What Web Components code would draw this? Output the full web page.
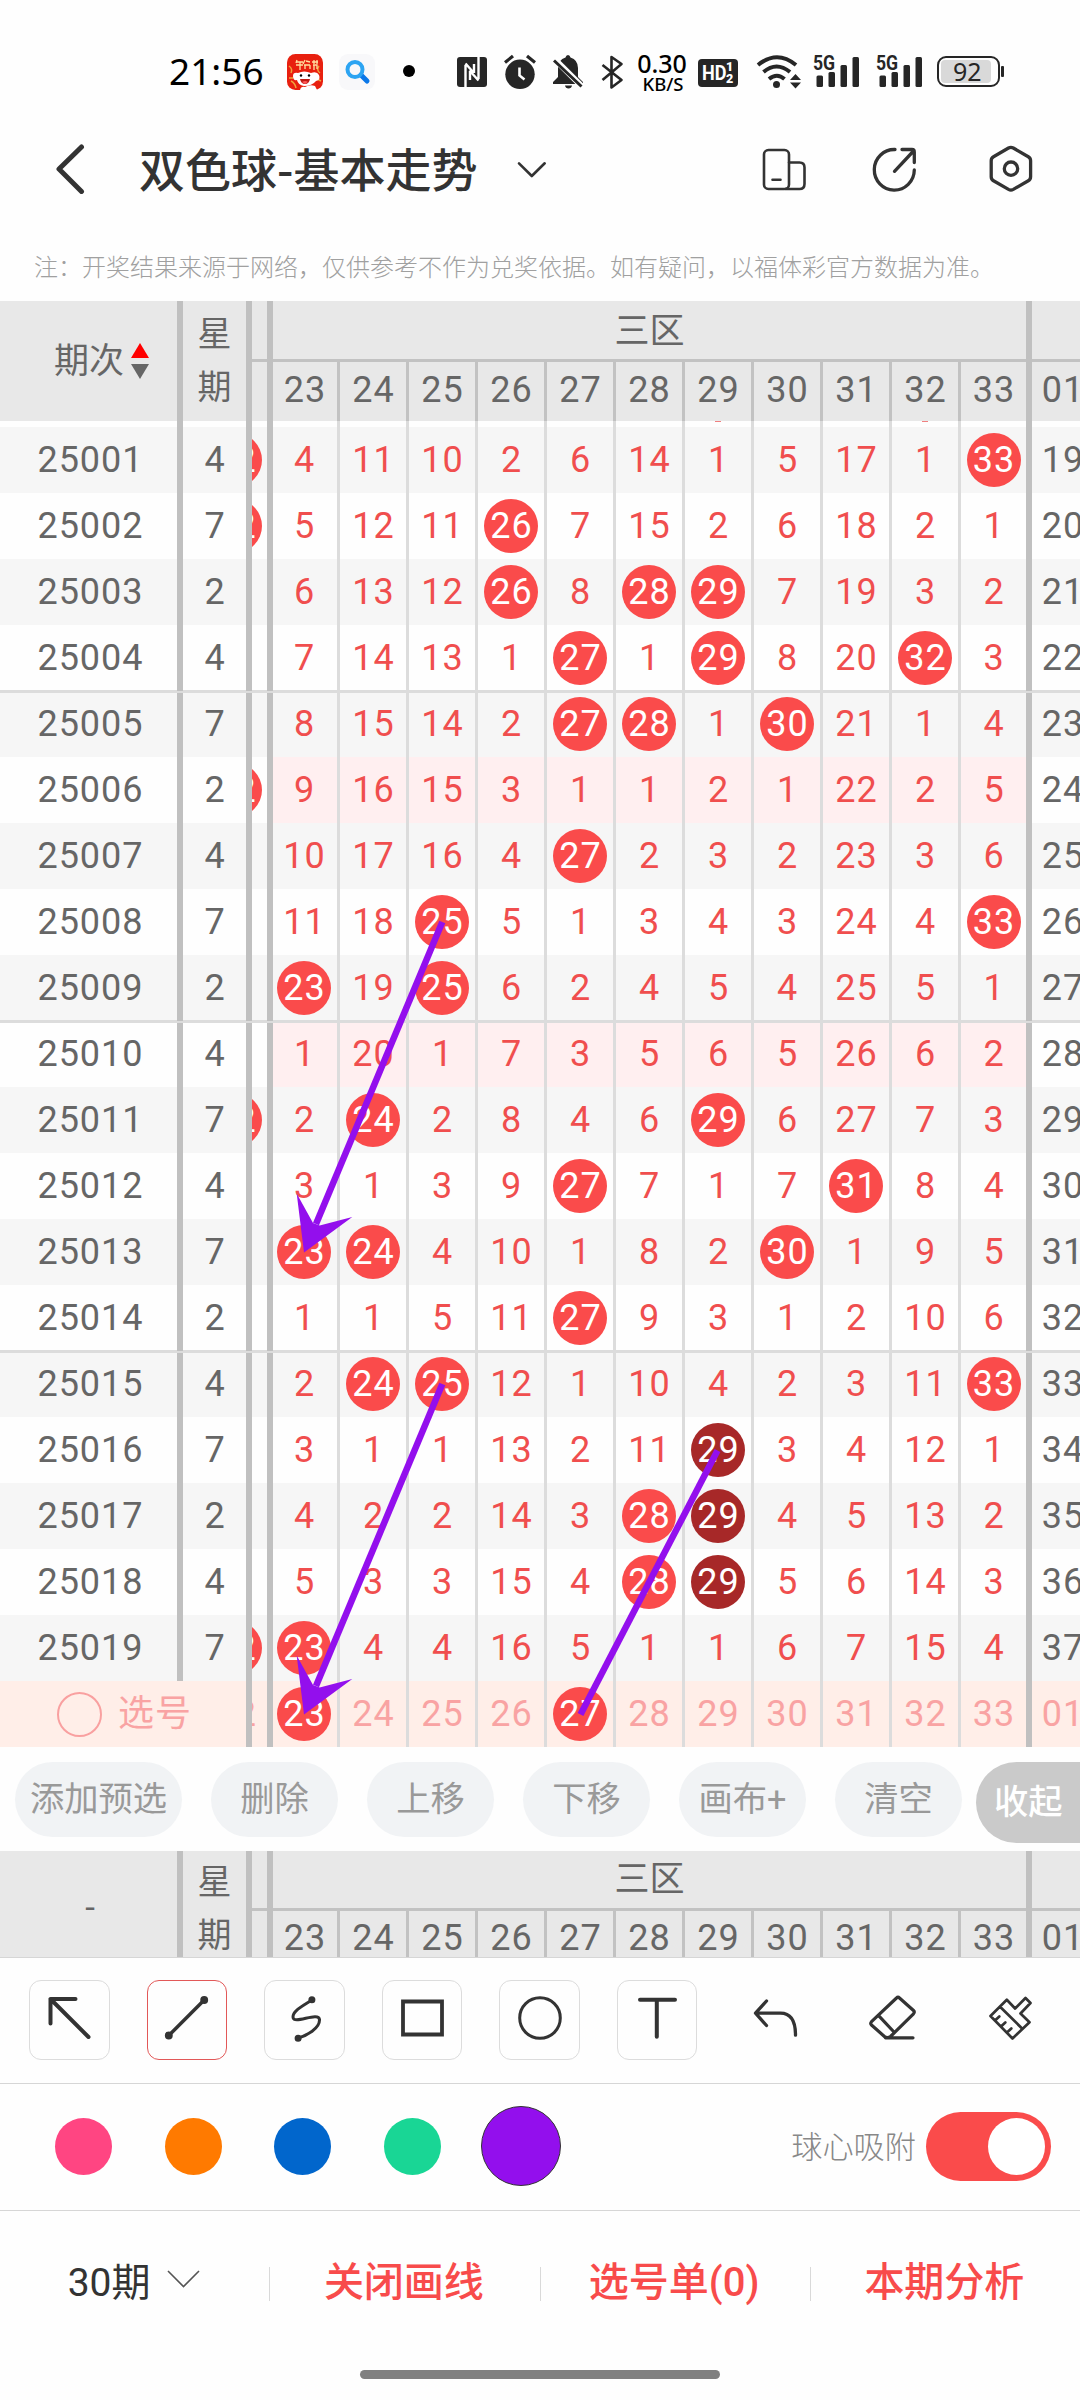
<!DOCTYPE html>
<html lang="zh-CN">
<head>
<meta charset="utf-8">
<title>双色球-基本走势</title>
<style>
html,body{margin:0;padding:0;background:#fefefe}
body{width:1080px;height:2400px;overflow:hidden;font-family:Roboto,"Noto Sans CJK SC",sans-serif;color:#333}
</style>
</head>
<body>
<lottery-app></lottery-app>
<script>
const define = (tag, css, html) => customElements.define(tag, class extends HTMLElement {
  constructor() {
    super();
    this.attachShadow({mode: 'open'}).innerHTML =
      `<style>*{box-sizing:border-box}:host{display:block;box-sizing:border-box}svg{display:block;flex:none}${css}</style>` +
      (typeof html === 'function' ? html(this) : html);
  }
});

define('status-bar', `
:host{display:flex;align-items:flex-start;height:102px;padding-left:169px}
:host>*{flex:none}
.time{width:96px;margin-top:46px;font:450 37px/50px "Noto Sans",sans-serif;color:#000;white-space:nowrap}
.rate{width:54px;margin:50px 0 0 11px;text-align:center;color:#000;font-family:"Noto Sans",sans-serif;white-space:nowrap}
.rate b{display:block;font-size:25px;line-height:26px;font-weight:500}
.rate i{display:block;font-style:normal;font-size:18.5px;line-height:15px;font-weight:500;margin-left:2px}
.hd{display:flex;width:40px;height:28px;margin:59px 0 0 9px;border-radius:4px;background:#262626;color:#fff;font:700 21px/28px Roboto,sans-serif;padding-left:4px}
.hd small{display:flex;flex-direction:column;font-size:12.5px;line-height:12px;padding-top:2px;margin-left:0}
.hd span{transform:scaleX(.86);transform-origin:0 0;width:24px}
.net{display:flex;margin:54px 0 0 12px;width:48px;height:34px;position:relative}
.net span{position:absolute;left:0;top:0;font:700 21px/18px Roboto,sans-serif;color:#262626;transform:scaleX(.84);transform-origin:0 0}
.bat{display:flex;align-items:center;margin:56px 0 0 13px}
.bat div{width:63px;height:31px;border:2.5px solid #262626;border-radius:9px;padding:2px 7px 2px 2px;display:flex}
.bat span{flex:1;background:#d9d9d9;border-radius:4px;text-align:center;font:400 25px/22px "Noto Sans",sans-serif;color:#262626;padding-left:3px}
.bat i{width:2.5px;height:11px;background:#262626;margin-left:1.5px;border-radius:1px}
`, `
<span class="time">21:56</span>
<svg style="margin:54px 0 0 22px" width="36" height="36" viewBox="0 0 36 36"><rect width="36" height="36" rx="8.5" fill="#e8200f"/><path d="M2 12q4 3 2 7M32 12q-3 4 1 7M4 27q4 2 5 7M2 24h4M30 25l4 2" stroke="#f0a33c" stroke-width="1.5" fill="none"/><path d="M10 6l-1 3M9 8h7M9 11h7M13 8v8M18 6l-2 4M19 7l4 1M17 11h6M18 11v4M23 11v4M25 8h6M27 6v4M30 6v4M26 11h4v4M27 11v5" stroke="#ffe0a0" stroke-width="1.3" fill="none"/><path d="M6 22q0-4 5-3q6-3 13 0q6-2 8 2q2 5-3 6q-4 5-12 5q-6-1-7-6q-4 1-4-4z" fill="#fff"/><circle cx="14" cy="21.5" r="1.2"/><circle cx="22" cy="21.5" r="1.2"/><path d="M13 25h10q-1 5-5 5t-5-5z" fill="#bf1912"/><path d="M15 28q3-2 6 0l-3 2z" fill="#f55"/><path d="M13 36q1-4 5-3q5-3 10-1l2 4z" fill="#fff"/></svg>
<svg style="margin:54px 0 0 16px" width="36" height="36" viewBox="339 54 36 36"><rect x="339" y="54" width="36" height="36" rx="9" fill="#f8f8fa"/><path d="M361 75l6 6" stroke="#0b77e8" stroke-width="5" stroke-linecap="round"/><circle cx="355" cy="69.500" r="7.500" fill="none" stroke="#2ca4f2" stroke-width="4"/></svg>
<svg style="margin:64.500px 0 0 28px" width="12" height="12"><circle cx="6" cy="6" r="6"/></svg>
<svg style="margin:57px 0 0 42px" width="30" height="30" viewBox="0 0 30 30"><rect width="30" height="30" rx="3" fill="#262626"/><path d="M8.500 30V8M8.500 6.500l8 9M13 14v9M21.500 0v22M21.500 23.500l-9-10M17 7v9" stroke="#fff" stroke-width="2.400" fill="none"/></svg>
<svg style="margin:54px 0 0 17px" width="32" height="36" viewBox="504 54 32 36"><circle cx="520" cy="74.300" r="14.700" fill="#262626"/><path d="M505 62.500l8-6.500M535 62.500l-8-6.500" stroke="#262626" stroke-width="3.200"/><path d="M519.500 67.500v8l5 4" stroke="#fff" stroke-width="2.600" fill="none"/></svg>
<svg style="margin:54px 0 0 16px" width="32" height="36" viewBox="552 54 32 36"><path d="M568 55q2 0 2.500 2.500Q578 60 578 68v9l5 5v2h-30v-2l5-5v-9q0-8 7.500-10.500Q566 55 568 55zM565 85.500h7q-.5 3-3.500 3t-3.500-3z" fill="#262626"/><path d="M554 58.500l28 28" stroke="#fff" stroke-width="6"/><path d="M554 60.500l27.500 26" stroke="#262626" stroke-width="3"/></svg>
<svg style="margin:54px 0 0 17px" width="23" height="36" viewBox="601 54 23 36"><path d="M602.500 65l19 15-10 7.500V57l10 7-19 16" stroke="#262626" stroke-width="2.600" fill="none" stroke-linejoin="round"/></svg>
<span class="rate"><b>0.30</b><i>KB/S</i></span>
<span class="hd"><span>HD</span><small><b>1</b><b>2</b></small></span>
<svg style="margin:54px 0 0 18px" width="45" height="36" viewBox="756 54 45 36"><g fill="none" stroke="#262626" stroke-width="4"><path d="M758 65q19-15.500 38 0"/><path d="M763.500 72q13-11 26.500 0"/><path d="M769 79q8-6.500 15.500 0"/></g><circle cx="776.500" cy="84.500" r="3.500" fill="#262626"/><path d="M790 80h11l-5.500-6zM790 82.500h11l-5.500 6z" fill="#262626"/></svg>
<span class="net"><svg width="48" height="34" viewBox="0 0 48 34" fill="#262626"><rect x="3.500" y="21.500" width="6.500" height="11.500" rx="1.500"/><rect x="15.500" y="18" width="6.500" height="15" rx="1.500"/><rect x="27.500" y="11" width="6.500" height="22" rx="1.500"/><rect x="39.500" y="3" width="6.500" height="30" rx="1.500"/></svg><span>5G</span></span>
<span class="net" style="margin-left:14.700px"><svg width="48" height="34" viewBox="0 0 48 34" fill="#262626"><rect x="3.500" y="21.500" width="6.500" height="11.500" rx="1.500"/><rect x="15.500" y="18" width="6.500" height="15" rx="1.500"/><rect x="27.500" y="11" width="6.500" height="22" rx="1.500"/><rect x="39.500" y="3" width="6.500" height="30" rx="1.500"/></svg><span>5G</span></span>
<span class="bat"><div><span>92</span></div><i></i></span>
`);

define('title-bar', `
:host{display:flex;align-items:center;height:134px;padding-left:56px}
h1{margin:0 0 5px 54px;width:341px;font:500 46px/60px "Noto Sans CJK SC",sans-serif;color:#333;white-space:nowrap}
svg{fill:none;stroke:#333;stroke-linecap:round;stroke-linejoin:round}
`, `
<svg width="29" height="50" viewBox="56 143 29 50" stroke-width="5"><path d="M81.500 146L59 168l22.500 22.500"/></svg>
<h1>双色球-基本走势</h1>
<svg style="margin-left:36px" width="32" height="20" viewBox="516 158 32 20" stroke-width="2.600"><path d="M519 162.300l12.800 12.700 12.900-12.700"/></svg>
<svg style="margin-left:213px" width="46" height="44" viewBox="761 147 46 44" stroke-width="2.600"><rect x="764" y="150" width="25" height="39" rx="4.500"/><path d="M789 162.500h10.500q5 0 5 5v16.500q0 5-5 5h-14M772.500 179.700h8"/></svg>
<svg style="margin-left:64px" width="47" height="46" viewBox="871 146 47 46" stroke-width="3.300"><path d="M895 149.500a20 20.300 0 1 0 19.300 20.500M894.500 171.300L914 150.500M902 149.500h10q2.300 0 2.300 2.500v10.500"/></svg>
<svg style="margin-left:71px" width="44" height="50" viewBox="989 144 44 50" stroke-width="3.300"><path d="M1008.500 148q2.400-1.300 4.800 0l15 8.700q2.300 1.300 2.300 4v16q0 2.700-2.300 4l-15 8.700q-2.400 1.300-4.800 0l-15-8.700q-2.300-1.300-2.300-4v-16q0-2.700 2.300-4z"/><circle cx="1011" cy="168.700" r="6.700"/></svg>
`);

define('notice-line', `
:host{height:65px;padding-left:34px;font:300 24px/60px "Noto Sans CJK SC",sans-serif;color:#a0a0a0;white-space:nowrap}
`, `<slot></slot>`);

define('trend-ball', `
:host{display:flex;flex:none;align-items:center;justify-content:center;width:54px;height:54px;border-radius:50%;background:#fa4b4b;color:#fff;padding-left:1px;line-height:54px}
:host([dark]){background:#a72828}
`, `<slot></slot>`);

const HEADS = [23,24,25,26,27,28,29,30,31,32,33];

define('trend-head', `
:host{display:flex;height:var(--h,120px);background:#e8e8e8;color:#666;font-size:36px;overflow:hidden}
.period{flex:none;width:183px;border-right:6px solid #c0c0c0;display:flex;align-items:center;justify-content:center;gap:7px;padding:var(--pp,0 0 7px 26px);font-size:35px}
.week{flex:none;width:69px;border-right:6px solid #c0c0c0;text-align:center;font-size:34px;line-height:53px;padding-top:var(--wp,7px)}
.week span{display:block}
.zone{flex:none;display:flex;flex-direction:column}
.zone header{flex:none;height:var(--zh,61px);border-bottom:3px solid #c2c2c2;text-align:center;font-size:35px;line-height:var(--zl,61px)}
.cols{flex:1;display:flex}
.cols span{width:69px;border-right:3px solid #c2c2c2;text-align:center;letter-spacing:1px;line-height:var(--nl,56px);padding-left:1px}
.cols span:first-child{width:67px;padding-right:1px}
.cols span:last-child{width:65px;border:0}
.gap{width:21px;border-right:6px solid #c0c0c0}
.main{width:759px;border-right:6px solid #c0c0c0}
.next .cols span:first-child{width:62px;padding:0}
svg{margin-top:6px}
`, el => `
<div class="period">${el.hasAttribute('sort') ? '<span>期次</span><svg width="18" height="36"><path d="M9 0l9 15H0z" fill="red"/><path d="M0 21h18l-9 15z" fill="#666"/></svg>' : '<span>-</span>'}</div>
<div class="week"><span>星</span><span>期</span></div>
<div class="zone gap"><header></header></div>
<div class="zone main"><header>三区</header><div class="cols">${HEADS.map(n => `<span>${n}</span>`).join('')}</div></div>
<div class="zone next"><header></header><div class="cols"><span>01</span></div></div>
`);

define('trend-row', `
:host{display:flex;height:66px;color:#666;font-size:36px;letter-spacing:1px;line-height:66px;overflow:hidden;background:var(--bg,#fefefe)}
:host([odd]){--bg:#f6f6f6}
:host([line]){border-top:3px solid #dcdcdc;line-height:62px;margin-top:-1px;height:67px}
:host([line]) .nums div,:host([line]) .c22{padding-bottom:2px}
:host([pick]){--bg:#ffeee8}
:host([tail]){height:6px}
.period,.week,.c22,.next{flex:none;text-align:center}
.period{width:183px;border-right:6px solid #c0c0c0;padding-left:4px}
.week{width:69px;border-right:6px solid #c0c0c0;padding-left:1px}
.c22{width:21px;border-right:6px solid #c0c0c0;overflow:hidden;display:flex;justify-content:flex-end;align-items:center}
.c22>*{margin-right:5px}
.c22 span{margin-right:10px}
.nums{flex:none;display:flex;width:759px;border-right:6px solid #c0c0c0;color:#f04e4e}
:host([miss]) .nums{background:#ffeff0}
.nums div{display:flex;flex:none;width:69px;justify-content:center;align-items:center;border-right:3px solid #dcdcdc}
.nums div>span{padding-left:1px}
.nums div:first-child{width:67px;padding-right:2px}
.nums div:last-child{width:65px;border:0}
.next{width:62px}
.pick{flex:none;width:252px;display:flex;align-items:center;border-right:6px solid #c0c0c0;padding-left:57px;gap:16px;font-size:36px}
.pick i{width:45px;height:45px;border:2.500px solid #f9a0a0;border-radius:50%}
:host([pick]),:host([pick]) .nums{color:#f9a3a3}
.tip{width:6px;height:1px;background:#f08080;margin-bottom:5px}
`, el => {
  const a = n => el.getAttribute(n);
  const vals = a('vals') ? a('vals').split(',') : [];
  const on = el.hasAttribute('pick') ? ['23', '27'] : HEADS.map(String);
  const left = el.hasAttribute('pick')
    ? '<div class="pick"><i></i><span>选号</span></div>'
    : `<div class="period">${a('period') || ''}</div><div class="week">${a('week') || ''}</div>`;
  const c22 = el.hasAttribute('hit22') ? '<trend-ball>22</trend-ball>' : el.hasAttribute('pick') ? '<span>22</span>' : '';
  const cells = HEADS.map((n, i) => {
    const v = vals[i] || '';
    if (el.hasAttribute('tail')) return `<div>${n === 29 || n === 32 ? '<i class="tip"></i>' : ''}</div>`;
    const ball = v === String(n) && on.includes(v);
    return `<div>${ball ? `<trend-ball${el.hasAttribute('dark') && n === 29 ? ' dark' : ''}>${v}</trend-ball>` : `<span>${v}</span>`}</div>`;
  }).join('');
  return `${left}<div class="c22">${c22}</div><div class="nums">${cells}</div><div class="next">${a('next') || ''}</div>`;
});

const DATA = [
'4,11,10,2,6,14,1,5,17,1,33','5,12,11,26,7,15,2,6,18,2,1','6,13,12,26,8,28,29,7,19,3,2','7,14,13,1,27,1,29,8,20,32,3',
'8,15,14,2,27,28,1,30,21,1,4','9,16,15,3,1,1,2,1,22,2,5','10,17,16,4,27,2,3,2,23,3,6','11,18,25,5,1,3,4,3,24,4,33',
'23,19,25,6,2,4,5,4,25,5,1','1,20,1,7,3,5,6,5,26,6,2','2,24,2,8,4,6,29,6,27,7,3','3,1,3,9,27,7,1,7,31,8,4',
'23,24,4,10,1,8,2,30,1,9,5','1,1,5,11,27,9,3,1,2,10,6','2,24,25,12,1,10,4,2,3,11,33','3,1,1,13,2,11,29,3,4,12,1',
'4,2,2,14,3,28,29,4,5,13,2','5,3,3,15,4,28,29,5,6,14,3','23,4,4,16,5,1,1,6,7,15,4'];
const WEEK = '4724724724747247247';

define('trend-table', `
:host{position:relative;height:1446px}
.ink{position:absolute;left:0;top:0}
`, () => `
<trend-head sort></trend-head>
<trend-row tail></trend-row>
${DATA.map((v, i) => {
  const n = i + 1, f = [];
  if (n % 2) f.push('odd');
  if ([5,10,15].includes(n)) f.push('line');
  if ([6,10].includes(n)) f.push('miss');
  if ([1,2,6,11,19].includes(n)) f.push('hit22');
  if (n >= 16 && n <= 18) f.push('dark');
  return `<trend-row ${f.join(' ')} period="${25000 + n}" week="${WEEK[i]}" vals="${v}" next="${18 + n}"></trend-row>`;
}).join('')}
<trend-row pick vals="${HEADS.join(',')}" next="01"></trend-row>
<svg class="ink" width="1080" height="1446" viewBox="0 301 1080 1446" fill="#930fed" stroke="none">
<g id="a"><path d="M442.300 922L316 1224" stroke="#930fed" stroke-width="6.500"/><path d="M304 1252.500L296.700 1193.500 313 1223 319.700 1225.500 352.300 1217z"/></g>
<use href="#a" y="462"/>
<path d="M717.500 1450.500L580.500 1714.500" stroke="#930fed" stroke-width="6.500"/>
</svg>`);

define('pill-button', `
:host{flex:none;width:127px;height:75px;border-radius:38px;background:#f1f3f5;color:#999;font-size:34.300px;line-height:75px;text-align:center;white-space:nowrap}
:host([wide]){width:167px}
:host([fold]){width:104px;height:81px;margin-left:-15px;border-radius:41px 0 0 41px;background:#cacaca;color:#fff;font-weight:500;text-align:left;padding-left:18px;line-height:80px}
`, `<slot></slot>`);
define('pill-bar', `:host{display:flex;gap:29px;height:104px;padding:15px 0 0 15px;overflow:hidden}`, `<slot></slot>`);

define('tool-button', `
:host{flex:none;width:80.500px;height:80px;border:1.500px solid transparent;display:flex;align-items:center;justify-content:center}
:host([boxed]){border-color:#dcdcdc;border-radius:12px}
:host([active]){border-color:#e25858}
::slotted(svg){display:block;fill:none;stroke:#333;stroke-linecap:round;stroke-linejoin:round}
`, `<slot></slot>`);
define('tool-bar', `:host{display:flex;gap:37.100px;height:126px;padding:22px 0 0 29px;border-top:1px solid #d6d6d6}`, `<slot></slot>`);

define('colour-dot', `
:host{flex:none;width:57px;height:57px;border-radius:50%;background:var(--c)}
:host([active]){width:80px;height:80px;border:1.500px solid #333}
`, ``);
define('toggle-switch', `
:host{flex:none;display:flex;align-items:center;justify-content:flex-end;width:125px;height:69px;border-radius:35px;background:#fa4b4b;padding-right:6px}
i{width:57px;height:57px;border-radius:50%;background:#fff}
`, `<i></i>`);
define('palette-bar', `
:host{display:flex;align-items:center;height:127px;padding:0 29px 2px 55px;border-top:1px solid #d6d6d6}
.dots{display:flex;align-items:center;gap:52.500px;flex:1}
.dots ::slotted([active]){margin-left:-12px}
label{font:300 31.200px/60px "Noto Sans CJK SC",sans-serif;color:#888;margin:0 10px 3px 0;white-space:nowrap}
`, `<div class="dots"><slot></slot></div><label>球心吸附</label><toggle-switch></toggle-switch>`);

define('bottom-nav', `
:host{display:flex;align-items:center;height:146px;border-top:1px solid #d6d6d6}
div{flex:1;display:flex;align-items:center;justify-content:center;height:34px;color:#f84b4b;font-weight:500;font-size:40px;white-space:nowrap;padding:0 2px 9px 0}
div+div{border-left:1px solid #d9d9d9}
.n{color:#333;font-weight:400;font-size:39px;gap:16px}
`, `
<div class="n"><span>30期</span><svg width="33" height="19" viewBox="0 0 33 19" fill="none" stroke="#555" stroke-width="1.600"><path d="M1 1l15.500 15.500L32 1"/></svg></div>
<div>关闭画线</div><div>选号单(0)</div><div>本期分析</div>`);
define('home-bar', `:host{width:360px;height:9px;border-radius:5px;background:#808080;margin:14px auto 0}`, ``);

define('lottery-app', `
:host{width:1080px;height:2400px;overflow:hidden;background:#fefefe}
.foot{--h:106px;--zh:60px;--zl:58px;--nl:55px;--wp:5px;--pp:6px 0 0 3px}
`, `
<status-bar></status-bar>
<title-bar></title-bar>
<notice-line>注：开奖结果来源于网络，仅供参考不作为兑奖依据。如有疑问，以福体彩官方数据为准。</notice-line>
<trend-table></trend-table>
<pill-bar><pill-button wide>添加预选</pill-button><pill-button>删除</pill-button><pill-button>上移</pill-button><pill-button>下移</pill-button><pill-button>画布+</pill-button><pill-button>清空</pill-button><pill-button fold>收起</pill-button></pill-bar>
<trend-head class="foot"></trend-head>
<tool-bar>
<tool-button boxed><svg width="80" height="80" viewBox="29.500 1980.500 80 80" stroke-width="4"><path d="M76 1999.500H51V2024M51 1999.500l38 38"/></svg></tool-button>
<tool-button boxed active><svg width="80" height="80" viewBox="147 1980.500 80 80" stroke-width="3.500"><path d="M168.800 2036L204.200 2000.500"/><circle cx="168.800" cy="2036" r="2.200"/><circle cx="204.200" cy="2000.500" r="2.200"/></svg></tool-button>
<tool-button boxed><svg width="80" height="80" viewBox="264.500 1980.500 80 80" stroke-width="3"><path d="M312.400 2000.500C304 2006 293.500 2011 293.500 2017.500C293.500 2026 319 2011.500 320 2020C320.500 2029 307 2036 298.600 2038.500"/><circle cx="312.400" cy="2000.300" r="2"/><circle cx="298.600" cy="2038.700" r="2"/></svg></tool-button>
<tool-button boxed><svg width="80" height="80" viewBox="382 1980.500 80 80" stroke-width="3.800"><path d="M403 2002h39v33h-39z" stroke-linejoin="miter"/></svg></tool-button>
<tool-button boxed><svg width="80" height="80" viewBox="500 1980.500 80 80" stroke-width="3"><circle cx="540" cy="2018.500" r="20.300"/></svg></tool-button>
<tool-button boxed><svg width="80" height="80" viewBox="617.500 1980.500 80 80" stroke-width="4"><path d="M640.500 2000.300h35M657.300 2000.300v37"/></svg></tool-button>
<tool-button><svg width="80" height="80" viewBox="735.500 1980.500 80 80" stroke-width="3.300"><path d="M767 2001.500l-11 12.200 11 12.300M756 2013.700h25q15 0 15 22"/></svg></tool-button>
<tool-button><svg width="80" height="80" viewBox="852.500 1980.500 80 80" stroke-width="3.200"><path d="M897 1998.500q1.500-1.500 3 0l14 12.500q1.500 1.500 0 3.300l-23 22.700q-2.500 2-5.500.5l-13.500-12q-1.500-1.500 0-3.300zM879.600 2016.700l14.400 15.300M886 2038.300h27.500"/></svg></tool-button>
<tool-button><svg width="80" height="80" viewBox="970.500 1980.500 80 80" stroke-width="2.700"><path d="M1015.600 2009L1026 1998.500l5 5L1021 2014l9 8.700-17 16.300-22-22.500 16.300-16.200zM1000.800 2007.500l22 21.700M995.500 2021l4.300-4M1001.500 2027l4.300-4M1007.500 2033l4.300-4"/></svg></tool-button>
</tool-bar>
<palette-bar><colour-dot style="--c:#ff4582"></colour-dot><colour-dot style="--c:#ff7a00"></colour-dot><colour-dot style="--c:#0166cc"></colour-dot><colour-dot style="--c:#19d695"></colour-dot><colour-dot active style="--c:#930fed"></colour-dot></palette-bar>
<bottom-nav></bottom-nav>
<home-bar></home-bar>
`);
</script>
</body>
</html>
